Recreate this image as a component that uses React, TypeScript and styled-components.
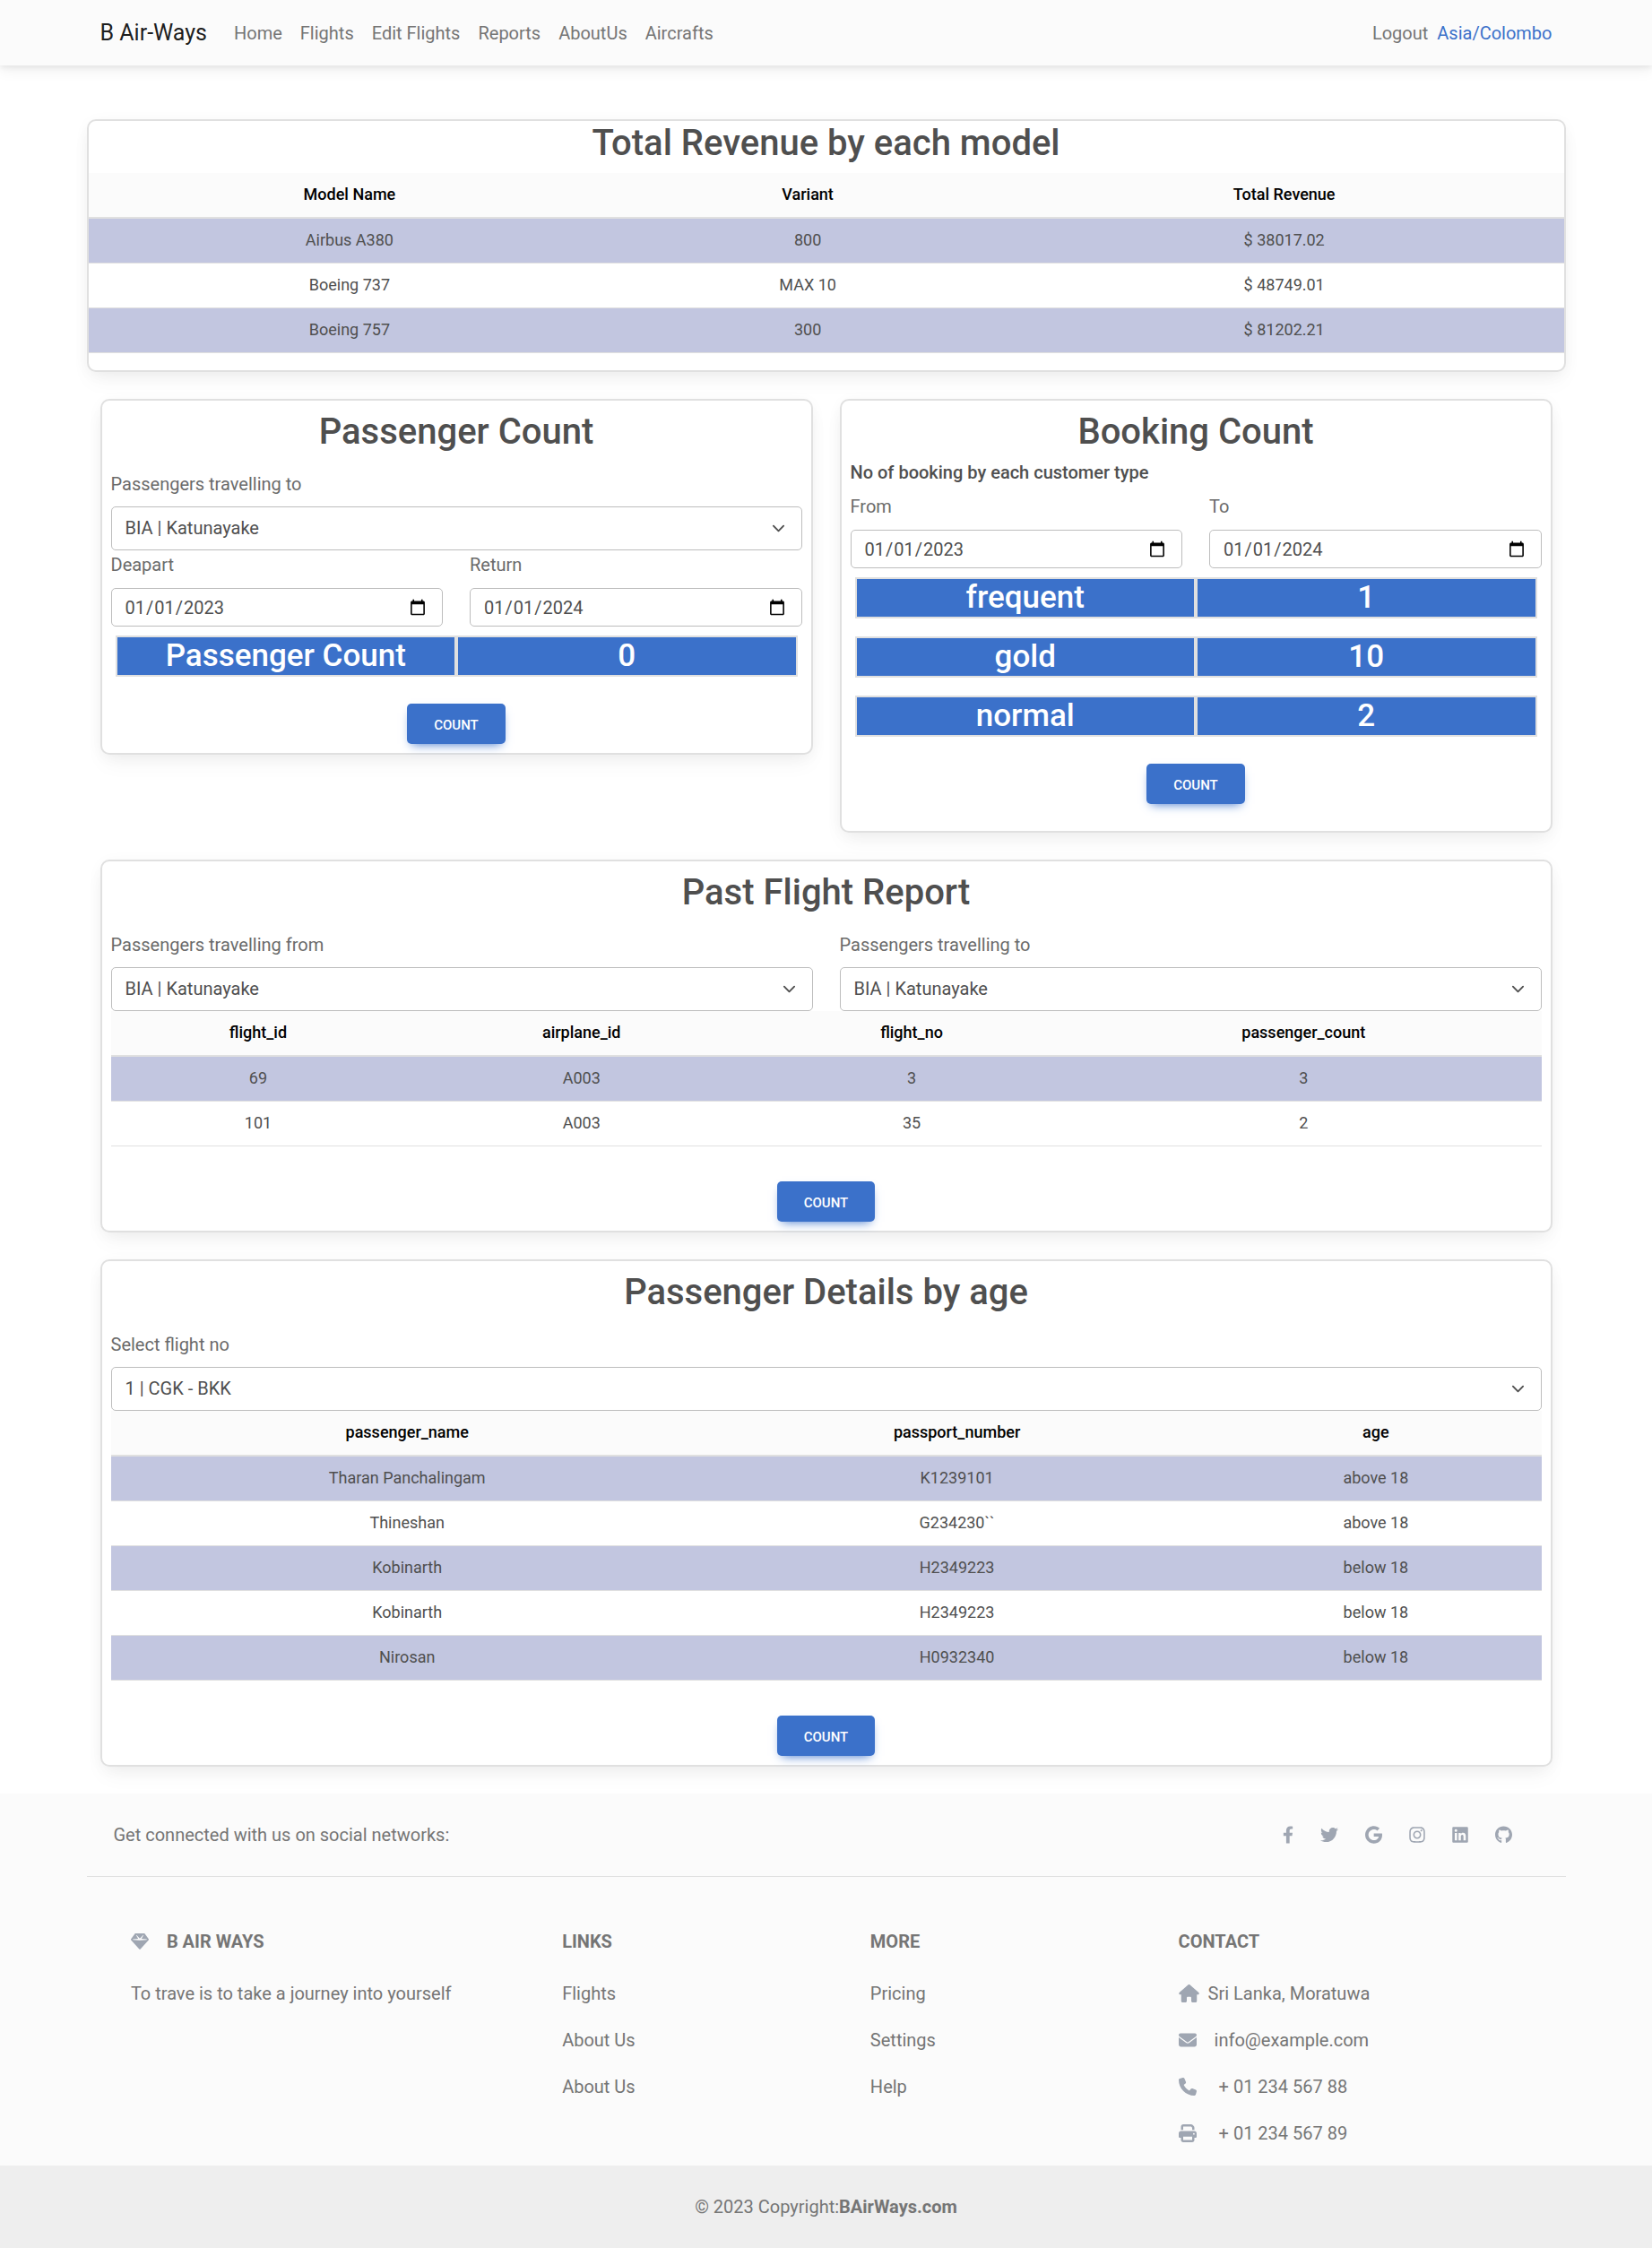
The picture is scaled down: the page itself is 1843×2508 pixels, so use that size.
import { useId, useState } from "react";
import type { ReactNode } from "react";
import styled, { createGlobalStyle } from "styled-components";
import {
  FaFacebookF,
  FaGithub,
  FaGoogle,
  FaInstagram,
  FaLinkedin,
  FaTwitter,
} from "react-icons/fa";
import { FaEnvelope, FaGem, FaHouse, FaPhone, FaPrint } from "react-icons/fa6";

const color = {
  primary: "#3b71ca",
  text: "#4f4f4f",
  label: "#6b6b6b",
  muted: "#757575",
  icon: "#9fa6b2",
  line: "#e0e0e0",
  field: "#bdbdbd",
  light: "#fbfbfb",
  stripe: "#c2c6e0",
};

const GlobalStyle = createGlobalStyle`
  *, *::before, *::after { box-sizing: border-box; }
  body {
    margin: 0;
    background: #fff;
    color: ${color.text};
    font-family: Roboto, "Liberation Sans", sans-serif;
    font-size: 20px;
    line-height: 32px;
  }
  h1, h2, h3, p, ul, dl, dd { margin: 0; padding: 0; }
  ul { list-style: none; }
  a { color: inherit; text-decoration: none; }
`;

const Container = styled.div`
  width: 100%;
  max-width: 1650px;
  margin: 0 auto;
`;

/* ---------- Navigation ---------- */

const NavBar = styled.header`
  background: ${color.light};
  box-shadow: 0 5px 15px rgba(0, 0, 0, 0.07), 0 3px 5px rgba(0, 0, 0, 0.05);
`;

const NavInner = styled(Container)`
  display: flex;
  align-items: center;
  height: 73px;
  padding: 0 15px;
`;

const Brand = styled.a`
  margin-right: 20px;
  color: rgba(0, 0, 0, 0.9);
  font-size: 25px;
  line-height: 40px;
`;

const NavList = styled.nav`
  display: flex;
  flex: 1;
`;

const NavLink = styled.a`
  padding: 0 10px;
  color: ${color.muted};
`;

const ZoneLink = styled.a`
  color: ${color.primary};
`;

/* ---------- Cards ---------- */

const Main = styled.main`
  width: 100%;
  max-width: 1650px;
  margin: 60px auto 30px;
  display: flex;
  flex-direction: column;
  gap: 30px;
`;

const Inset = styled.div`
  display: flex;
  flex-direction: column;
  gap: 30px;
  padding: 0 15px;
`;

const Card = styled.section<{ $flush?: boolean }>`
  padding: ${(p) => (p.$flush ? "0" : "10px")};
  background: #fff;
  border: 2px solid ${color.line};
  border-radius: 10px;
  box-shadow: 0 3px 19px -4px rgba(0, 0, 0, 0.07),
    0 13px 25px -3px rgba(0, 0, 0, 0.04);
`;

const CardTitle = styled.h2`
  margin-bottom: 8px;
  font-size: 40px;
  font-weight: 500;
  line-height: 50px;
  text-align: center;
`;

const CardSubtitle = styled.h3`
  margin-bottom: 10px;
  font-size: 20px;
  font-weight: 500;
  line-height: 24px;
`;

const TwoColumns = styled.div`
  display: grid;
  grid-template-columns: 1fr 1fr;
  align-items: start;
  column-gap: 30px;
`;

/* ---------- Form fields ---------- */

const SelectGroup = styled.div`
  display: flex;
  flex-direction: column;
  gap: 9px;
  padding-top: 9px;
`;

const DateGroup = styled.div`
  display: flex;
  flex-direction: column;
  gap: 10px;
  margin-bottom: 10px;
`;

const Label = styled.label`
  color: ${color.label};
`;

const SelectShell = styled.div`
  display: grid;
  align-items: center;
  > * {
    grid-area: 1 / 1;
  }
`;

const Select = styled.select`
  appearance: none;
  width: 100%;
  margin: 0;
  padding: 7px 45px 8px 15px;
  border: 1px solid ${color.field};
  border-radius: 5px;
  background: #fff;
  color: ${color.text};
  font: inherit;
`;

const Chevron = styled.svg`
  justify-self: end;
  width: 15px;
  height: 15px;
  margin-right: 19px;
  pointer-events: none;
`;

const DateInput = styled.input`
  width: 100%;
  height: 43px;
  margin: 0;
  padding: 0 15px 0 14px;
  border: 1px solid ${color.field};
  border-radius: 5px;
  background: #fff;
  color: ${color.text};
  font: inherit;
`;

const Actions = styled.div<{ $top: number; $bottom?: number }>`
  display: flex;
  justify-content: center;
  padding-top: ${(p) => p.$top}px;
  padding-bottom: ${(p) => p.$bottom ?? 0}px;
`;

const Button = styled.button`
  padding: 13px 30px 10px;
  border: 0;
  border-radius: 5px;
  background: ${color.primary};
  box-shadow: 0 5px 11px -5px ${color.primary};
  color: #fff;
  font-family: inherit;
  font-size: 15px;
  font-weight: 500;
  line-height: 22px;
  text-transform: uppercase;
  cursor: pointer;
`;

/* ---------- Tables and tallies ---------- */

const Table = styled.table`
  width: 100%;
  margin-bottom: 19px;
  border-collapse: separate;
  border-spacing: 0;
  font-size: 18px;
  line-height: 29px;
  text-align: center;

  th,
  td {
    padding: 9px 28px 11px;
    border-bottom: 1px solid ${color.line};
  }
  th {
    border-bottom-width: 2px;
    background: ${color.light};
    color: #000;
    font-weight: 500;
  }
  tbody tr:nth-child(odd) {
    background: ${color.stripe};
  }
`;

const TallyList = styled.dl`
  display: flex;
  flex-direction: column;
  gap: 20px;
  padding: 0 5px;
`;

const TallyRow = styled.div`
  display: grid;
  grid-template-columns: 1fr 1fr;
  color: #fff;
  font-size: 35px;
  font-weight: 500;
  line-height: 42px;
  text-align: center;

  dt,
  dd {
    border: 2px solid ${color.line};
    background: ${color.primary};
  }
`;

/* ---------- Footer ---------- */

const FooterBar = styled.footer`
  background: ${color.light};
  color: ${color.muted};
`;

const SocialRow = styled(Container)`
  display: flex;
  justify-content: space-between;
  padding: 30px 60px 30px 30px;
  border-bottom: 1px solid ${color.line};
`;

const SocialLinks = styled.div`
  display: flex;
  align-items: center;
  gap: 30px;
`;

const SocialLink = styled.a<{ $width: number }>`
  display: flex;
  color: ${color.icon};

  svg {
    width: ${(p) => p.$width}px;
    height: 20px;
  }
`;

const FooterColumns = styled(Container)`
  display: flex;
  justify-content: space-around;
  padding-top: 60px;
`;

const FooterColumn = styled.div<{ $span: number }>`
  flex: 0 0 calc(100% * ${(p) => p.$span} / 12);
  padding: 0 15px;
`;

const FooterTitle = styled.h3`
  display: flex;
  align-items: center;
  margin-bottom: 30px;
  font-size: 20px;
  font-weight: 700;
  line-height: 24px;
  text-transform: uppercase;
`;

const FooterLine = styled.li`
  display: flex;
  align-items: center;
  margin-bottom: 20px;
`;

const IconSlot = styled.span<{ $gap: number; $width: number }>`
  display: flex;
  margin-right: ${(p) => p.$gap}px;
  color: ${color.icon};

  svg {
    width: ${(p) => p.$width}px;
    height: 20px;
  }
`;

const Copyright = styled.div`
  padding: 30px;
  background: #eeeeee;
  text-align: center;

  a {
    font-weight: 700;
  }
`;

/* ---------- Data ---------- */

const NAV = ["Home", "Flights", "Edit Flights", "Reports", "AboutUs", "Aircrafts"];
const AIRPORTS = ["BIA | Katunayake"];
const FLIGHTS = ["1 | CGK - BKK"];

const SOCIAL = [
  { name: "Facebook", icon: <FaFacebookF />, width: 12 },
  { name: "Twitter", icon: <FaTwitter />, width: 20 },
  { name: "Google", icon: <FaGoogle />, width: 19 },
  { name: "Instagram", icon: <FaInstagram />, width: 18 },
  { name: "LinkedIn", icon: <FaLinkedin />, width: 18 },
  { name: "GitHub", icon: <FaGithub />, width: 19 },
];

const CONTACT = [
  { icon: <FaHouse />, width: 23, gap: 10, text: "Sri Lanka, Moratuwa" },
  { icon: <FaEnvelope />, width: 20, gap: 20, text: "info@example.com" },
  { icon: <FaPhone />, width: 20, gap: 25, text: "+ 01 234 567 88" },
  { icon: <FaPrint />, width: 20, gap: 25, text: "+ 01 234 567 89" },
];

/* ---------- Building blocks ---------- */

function SelectField({ label, options }: { label: string; options: string[] }) {
  const id = useId();
  return (
    <SelectGroup>
      <Label htmlFor={id}>{label}</Label>
      <SelectShell>
        <Select id={id}>
          {options.map((o) => (
            <option key={o}>{o}</option>
          ))}
        </Select>
        <Chevron viewBox="0 0 16 16" fill="none" aria-hidden="true">
          <path
            d="M2 5l6 6 6-6"
            stroke={color.text}
            strokeWidth="2"
            strokeLinecap="round"
            strokeLinejoin="round"
          />
        </Chevron>
      </SelectShell>
    </SelectGroup>
  );
}

function DateField({ label, initial }: { label: string; initial: string }) {
  const id = useId();
  const [value, setValue] = useState(initial);
  return (
    <DateGroup>
      <Label htmlFor={id}>{label}</Label>
      <DateInput
        id={id}
        type="date"
        value={value}
        onChange={(e) => setValue(e.target.value)}
      />
    </DateGroup>
  );
}

function DataTable({ columns, rows }: { columns: string[]; rows: string[][] }) {
  return (
    <Table>
      <thead>
        <tr>
          {columns.map((c) => (
            <th key={c} scope="col">
              {c}
            </th>
          ))}
        </tr>
      </thead>
      <tbody>
        {rows.map((row, i) => (
          <tr key={i}>
            {row.map((cell, j) => (
              <td key={j}>{cell}</td>
            ))}
          </tr>
        ))}
      </tbody>
    </Table>
  );
}

function Tally({ items }: { items: [string, number][] }) {
  return (
    <TallyList>
      {items.map(([name, count]) => (
        <TallyRow key={name}>
          <dt>{name}</dt>
          <dd>{count}</dd>
        </TallyRow>
      ))}
    </TallyList>
  );
}

function CountAction({ top, bottom }: { top: number; bottom?: number }) {
  return (
    <Actions $top={top} $bottom={bottom}>
      <Button type="button">Count</Button>
    </Actions>
  );
}

function LinkColumn({ title, links }: { title: string; links: string[] }) {
  return (
    <FooterColumn $span={2}>
      <FooterTitle>{title}</FooterTitle>
      <ul>
        {links.map((l, i) => (
          <FooterLine key={i}>
            <a href="#">{l}</a>
          </FooterLine>
        ))}
      </ul>
    </FooterColumn>
  );
}

interface WithIconProps {
  icon: ReactNode;
  width: number;
  gap: number;
  children: ReactNode;
}

function WithIcon({ icon, width, gap, children }: WithIconProps) {
  return (
    <>
      <IconSlot $gap={gap} $width={width} aria-hidden="true">
        {icon}
      </IconSlot>
      <span>{children}</span>
    </>
  );
}

/* ---------- Page ---------- */

export default function App() {
  return (
    <>
      <GlobalStyle />
      <NavBar>
        <NavInner>
          <Brand href="#">B Air-Ways</Brand>
          <NavList>
            {NAV.map((item) => (
              <NavLink key={item} href="#">
                {item}
              </NavLink>
            ))}
          </NavList>
          <NavLink href="#">Logout</NavLink>
          <ZoneLink href="#">Asia/Colombo</ZoneLink>
        </NavInner>
      </NavBar>

      <Main>
        <Card $flush>
          <CardTitle>Total Revenue by each model</CardTitle>
          <DataTable
            columns={["Model Name", "Variant", "Total Revenue"]}
            rows={[
              ["Airbus A380", "800", "$ 38017.02"],
              ["Boeing 737", "MAX 10", "$ 48749.01"],
              ["Boeing 757", "300", "$ 81202.21"],
            ]}
          />
        </Card>

        <Inset>
          <TwoColumns>
            <Card>
              <CardTitle>Passenger Count</CardTitle>
              <SelectField label="Passengers travelling to" options={AIRPORTS} />
              <TwoColumns>
                <DateField label="Deapart" initial="2023-01-01" />
                <DateField label="Return" initial="2024-01-01" />
              </TwoColumns>
              <Tally items={[["Passenger Count", 0]]} />
              <CountAction top={30} />
            </Card>

            <Card>
              <CardTitle>Booking Count</CardTitle>
              <CardSubtitle>No of booking by each customer type</CardSubtitle>
              <TwoColumns>
                <DateField label="From" initial="2023-01-01" />
                <DateField label="To" initial="2024-01-01" />
              </TwoColumns>
              <Tally
                items={[
                  ["frequent", 1],
                  ["gold", 10],
                  ["normal", 2],
                ]}
              />
              <CountAction top={30} bottom={20} />
            </Card>
          </TwoColumns>

          <Card>
            <CardTitle>Past Flight Report</CardTitle>
            <TwoColumns>
              <SelectField label="Passengers travelling from" options={AIRPORTS} />
              <SelectField label="Passengers travelling to" options={AIRPORTS} />
            </TwoColumns>
            <DataTable
              columns={["flight_id", "airplane_id", "flight_no", "passenger_count"]}
              rows={[
                ["69", "A003", "3", "3"],
                ["101", "A003", "35", "2"],
              ]}
            />
            <CountAction top={20} />
          </Card>

          <Card>
            <CardTitle>Passenger Details by age</CardTitle>
            <SelectField label="Select flight no" options={FLIGHTS} />
            <DataTable
              columns={["passenger_name", "passport_number", "age"]}
              rows={[
                ["Tharan Panchalingam", "K1239101", "above 18"],
                ["Thineshan", "G234230``", "above 18"],
                ["Kobinarth", "H2349223", "below 18"],
                ["Kobinarth", "H2349223", "below 18"],
                ["Nirosan", "H0932340", "below 18"],
              ]}
            />
            <CountAction top={20} />
          </Card>
        </Inset>
      </Main>

      <FooterBar>
        <SocialRow>
          <span>Get connected with us on social networks:</span>
          <SocialLinks>
            {SOCIAL.map((s) => (
              <SocialLink key={s.name} $width={s.width} href="#" aria-label={s.name}>
                {s.icon}
              </SocialLink>
            ))}
          </SocialLinks>
        </SocialRow>

        <FooterColumns>
          <FooterColumn $span={3}>
            <FooterTitle>
              <WithIcon icon={<FaGem />} width={20} gap={20}>
                B Air Ways
              </WithIcon>
            </FooterTitle>
            <p>To trave is to take a journey into yourself</p>
          </FooterColumn>
          <LinkColumn title="Links" links={["Flights", "About Us", "About Us"]} />
          <LinkColumn title="More" links={["Pricing", "Settings", "Help"]} />
          <FooterColumn $span={3}>
            <FooterTitle>Contact</FooterTitle>
            <ul>
              {CONTACT.map((c) => (
                <FooterLine key={c.text}>
                  <WithIcon icon={c.icon} width={c.width} gap={c.gap}>
                    {c.text}
                  </WithIcon>
                </FooterLine>
              ))}
            </ul>
          </FooterColumn>
        </FooterColumns>

        <Copyright>
          © 2023 Copyright:<a href="#">BAirWays.com</a>
        </Copyright>
      </FooterBar>
    </>
  );
}
